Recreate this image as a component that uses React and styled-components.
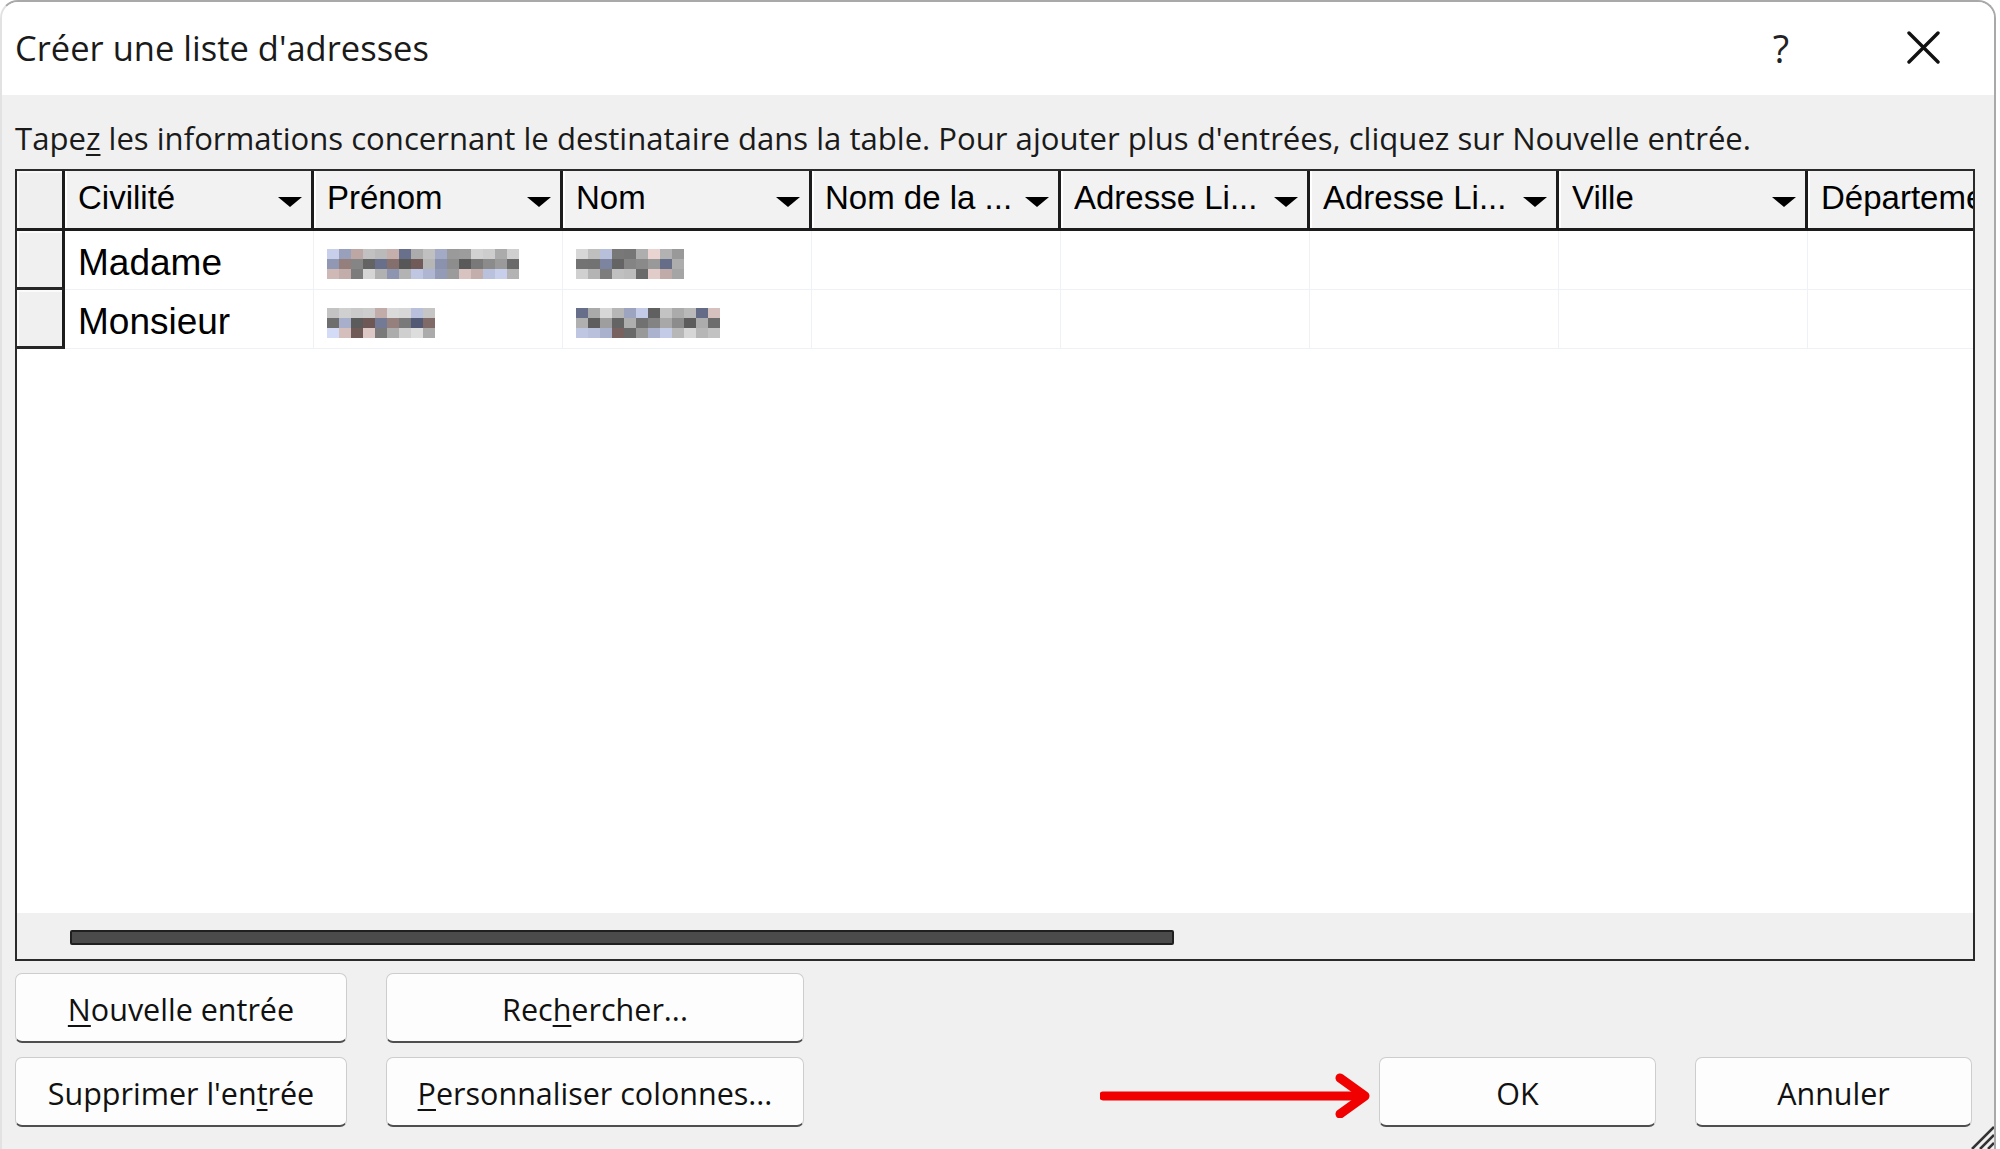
import React from 'react';
import styled, { createGlobalStyle } from 'styled-components';

const Page = createGlobalStyle`
  html, body {
    margin: 0;
    padding: 0;
    background: #ffffff;
    overflow: hidden;
  }
  * {
    box-sizing: border-box;
  }
`;

const uiFont = '"Open Sans", "Noto Sans", "DejaVu Sans", sans-serif';
const gridFont = '"Liberation Sans", Arial, sans-serif';

const Window = styled.div`
  position: relative;
  width: 1996px;
  height: 1149px;
  border: 2px solid #a9a9a9;
  border-left-color: #e2e2e2;
  border-bottom: none;
  border-radius: 18px 18px 0 0;
  background: #f0f0f0;
  display: flex;
  flex-direction: column;
  overflow: hidden;
  font-family: ${uiFont};
  color: #1a1a1a;
`;

const TitleBar = styled.div`
  height: 93px;
  flex: none;
  background: #ffffff;
  display: flex;
  align-items: center;
  padding: 0 0 2px 13px;
`;

const Title = styled.div`
  flex: 1;
  font-size: 34.5px;
  white-space: nowrap;
`;

const HelpGlyph = styled.div`
  width: 112px;
  text-align: center;
  font-size: 38px;
  color: #222;
`;

const CloseBox = styled.div`
  width: 112px;
  margin: 0 15px 0 30px;
  display: flex;
  align-items: center;
  justify-content: center;
`;

const Instruction = styled.div`
  height: 74px;
  flex: none;
  padding: 13px 0 0 13px;
  line-height: 60px;
  font-size: 31.1px;
  white-space: nowrap;

  u {
    text-decoration-thickness: 2px;
    text-underline-offset: 4px;
  }
`;

const Table = styled.div`
  margin-left: 13px;
  width: 1960px;
  height: 792px;
  flex: none;
  border: 2px solid #2a2a2a;
  background: #ffffff;
  display: flex;
  flex-direction: column;
  overflow: hidden;
  font-family: ${gridFont};
  color: #000;
`;

const HeaderRow = styled.div`
  display: flex;
  height: 60px;
  flex: none;
  border-bottom: 3px solid #1c1c1c;
  background: #f2f2f2;
`;

const SelectorHead = styled.div`
  width: 48px;
  flex: none;
  border-right: 3px solid #1c1c1c;
  background: #efefef;
  box-shadow: inset 2px 2px 0 #f8f8f8;
`;

const HeaderCell = styled.div`
  width: 249px;
  flex: none;
  display: flex;
  align-items: center;
  padding: 0 9px 4px 13px;
  border-right: 3px solid #1c1c1c;
  box-shadow: inset 2px 0 0 #ffffff;
  font-size: 33px;
  white-space: nowrap;
`;

const HeaderLabel = styled.span`
  flex: 1;
  overflow: hidden;
`;

const DropArrow = styled.span`
  flex: none;
  width: 0;
  height: 0;
  margin-top: 8px;
  border-left: 12px solid transparent;
  border-right: 12px solid transparent;
  border-top: 10px solid #000;
`;

const Row = styled.div`
  display: flex;
  height: 59px;
  flex: none;
`;

const RowSelector = styled.div`
  width: 48px;
  flex: none;
  background: #f0f0f0;
  border-right: 3px solid #1c1c1c;
  border-bottom: 3px solid #262626;
  box-shadow: inset 2px 2px 0 #fbfbfb;
`;

const BodyCell = styled.div`
  width: 249px;
  flex: none;
  display: flex;
  align-items: center;
  padding: 6px 0 0 13px;
  border-right: 1px solid #eef1f6;
  border-bottom: 1px solid #eef1f6;
  font-size: 37px;
  white-space: nowrap;
`;

const Filler = styled.div`
  flex: 1;
`;

const ScrollBand = styled.div`
  height: 46px;
  flex: none;
  background: #f0f0f0;
  display: flex;
  align-items: center;
  padding: 2px 0 0 53px;
`;

const Thumb = styled.div`
  width: 1104px;
  height: 15px;
  background: #4b4b4b;
  border: 2px solid #202020;
  border-radius: 2px;
`;

const MosaicGrid = styled.div`
  display: grid;
  grid-template-columns: repeat(${p => p.$cols}, 12px);
  grid-auto-rows: 10px;
  margin-top: 1px;
`;

const Footer = styled.div`
  flex: 1;
  display: flex;
  align-items: flex-start;
  padding: 12px 22px 0 13px;
`;

const LeftButtons = styled.div`
  display: grid;
  grid-template-columns: 332px 418px;
  grid-auto-rows: 70px;
  column-gap: 39px;
  row-gap: 14px;
`;

const Spacer = styled.div`
  flex: 1;
`;

const ConfirmGroup = styled.div`
  display: flex;
  align-items: center;
  padding-top: 84px;
`;

const DialogButton = styled.div`
  width: ${p => p.$width}px;
  height: 70px;
  display: flex;
  align-items: center;
  justify-content: center;
  padding-top: 2px;
  background: #fdfdfd;
  border: 1px solid #cdcdcd;
  border-bottom: 2px solid #4f4f4f;
  border-radius: 7px;
  font-size: 30.5px;
  color: #111;
  white-space: nowrap;

  u {
    text-decoration-thickness: 2px;
    text-underline-offset: 4px;
  }
`;

const CancelButton = styled(DialogButton)`
  margin-left: 39px;
`;

const ArrowMark = styled.svg`
  flex: none;
  margin-right: 7px;
`;

const Grip = styled.svg`
  position: absolute;
  right: 0;
  bottom: 0;
`;

const columns = [
  'Civilité',
  'Prénom',
  'Nom',
  'Nom de la ...',
  'Adresse Li...',
  'Adresse Li...',
  'Ville',
  'Département',
];

const rows = [
  { civ: 'Madame', first: { cols: 16, seed: 11 }, last: { cols: 9, seed: 23 } },
  { civ: 'Monsieur', first: { cols: 9, seed: 37 }, last: { cols: 12, seed: 51 } },
];

// deterministic noise so the redacted names look pixelated, same every run
const makeRand = seed => {
  let s = seed * 9301 + 49297;
  return () => {
    s = (s * 9301 + 49297) % 233280;
    return s / 233280;
  };
};

const blockColor = (rand, line) => {
  const ranges = [[150, 220], [80, 185], [150, 225]];
  const [lo, hi] = ranges[line];
  let v = Math.round(lo + rand() * (hi - lo));
  if (rand() < 0.15) v = 95 + Math.round(rand() * 30);
  const tint = rand();
  if (tint < 0.25) return `rgb(${v - 14}, ${v - 6}, ${Math.min(255, v + 22)})`;
  if (tint < 0.4) return `rgb(${Math.min(255, v + 16)}, ${v - 6}, ${v - 8})`;
  return `rgb(${v}, ${v}, ${v})`;
};

const Mosaic = ({ cols, seed }) => {
  const rand = makeRand(seed);
  const blocks = [];
  for (let line = 0; line < 3; line += 1) {
    for (let c = 0; c < cols; c += 1) {
      blocks.push(<span key={`${line}-${c}`} style={{ background: blockColor(rand, line) }} />);
    }
  }
  return <MosaicGrid $cols={cols}>{blocks}</MosaicGrid>;
};

const CloseIcon = () => (
  <svg width="33" height="33" viewBox="0 0 33 33">
    <path d="M2 2 L31 31 M31 2 L2 31" stroke="#111" strokeWidth="3.4" strokeLinecap="round" fill="none" />
  </svg>
);

const App = () => (
  <>
    <Page />
    <Window>
      <TitleBar>
        <Title>Créer une liste d'adresses</Title>
        <HelpGlyph>?</HelpGlyph>
        <CloseBox>
          <CloseIcon />
        </CloseBox>
      </TitleBar>

      <Instruction>
        Tape<u>z</u> les informations concernant le destinataire dans la table. Pour ajouter plus d'entrées, cliquez sur Nouvelle entrée.
      </Instruction>

      <Table>
        <HeaderRow>
          <SelectorHead />
          {columns.map((label, i) => (
            <HeaderCell key={i}>
              <HeaderLabel>{label}</HeaderLabel>
              {i < columns.length - 1 && <DropArrow />}
            </HeaderCell>
          ))}
        </HeaderRow>

        {rows.map(row => (
          <Row key={row.civ}>
            <RowSelector />
            <BodyCell>{row.civ}</BodyCell>
            <BodyCell>
              <Mosaic {...row.first} />
            </BodyCell>
            <BodyCell>
              <Mosaic {...row.last} />
            </BodyCell>
            {columns.slice(3).map((c, i) => (
              <BodyCell key={i} />
            ))}
          </Row>
        ))}

        <Filler />
        <ScrollBand>
          <Thumb />
        </ScrollBand>
      </Table>

      <Footer>
        <LeftButtons>
          <DialogButton $width={332}>
            <span><u>N</u>ouvelle entrée</span>
          </DialogButton>
          <DialogButton $width={418}>
            <span>Rec<u>h</u>ercher...</span>
          </DialogButton>
          <DialogButton $width={332}>
            <span>Supprimer l'en<u>t</u>rée</span>
          </DialogButton>
          <DialogButton $width={418}>
            <span><u>P</u>ersonnaliser colonnes...</span>
          </DialogButton>
        </LeftButtons>
        <Spacer />
        <ConfirmGroup>
          <ArrowMark width="272" height="52" viewBox="0 0 272 52">
            <path d="M3 30 H258" stroke="#f00000" strokeWidth="9" strokeLinecap="round" fill="none" />
            <path d="M240 12 L265 30 L240 48" stroke="#f00000" strokeWidth="9" strokeLinecap="round" strokeLinejoin="round" fill="none" />
          </ArrowMark>
          <DialogButton $width={277}>OK</DialogButton>
          <CancelButton $width={277}>Annuler</CancelButton>
        </ConfirmGroup>
      </Footer>

      <Grip width="26" height="26" viewBox="0 0 26 26">
        <path d="M4 26 L26 4 M12 26 L26 12 M20 26 L26 20" stroke="#333" strokeWidth="2.5" fill="none" />
      </Grip>
    </Window>
  </>
);

export default App;
